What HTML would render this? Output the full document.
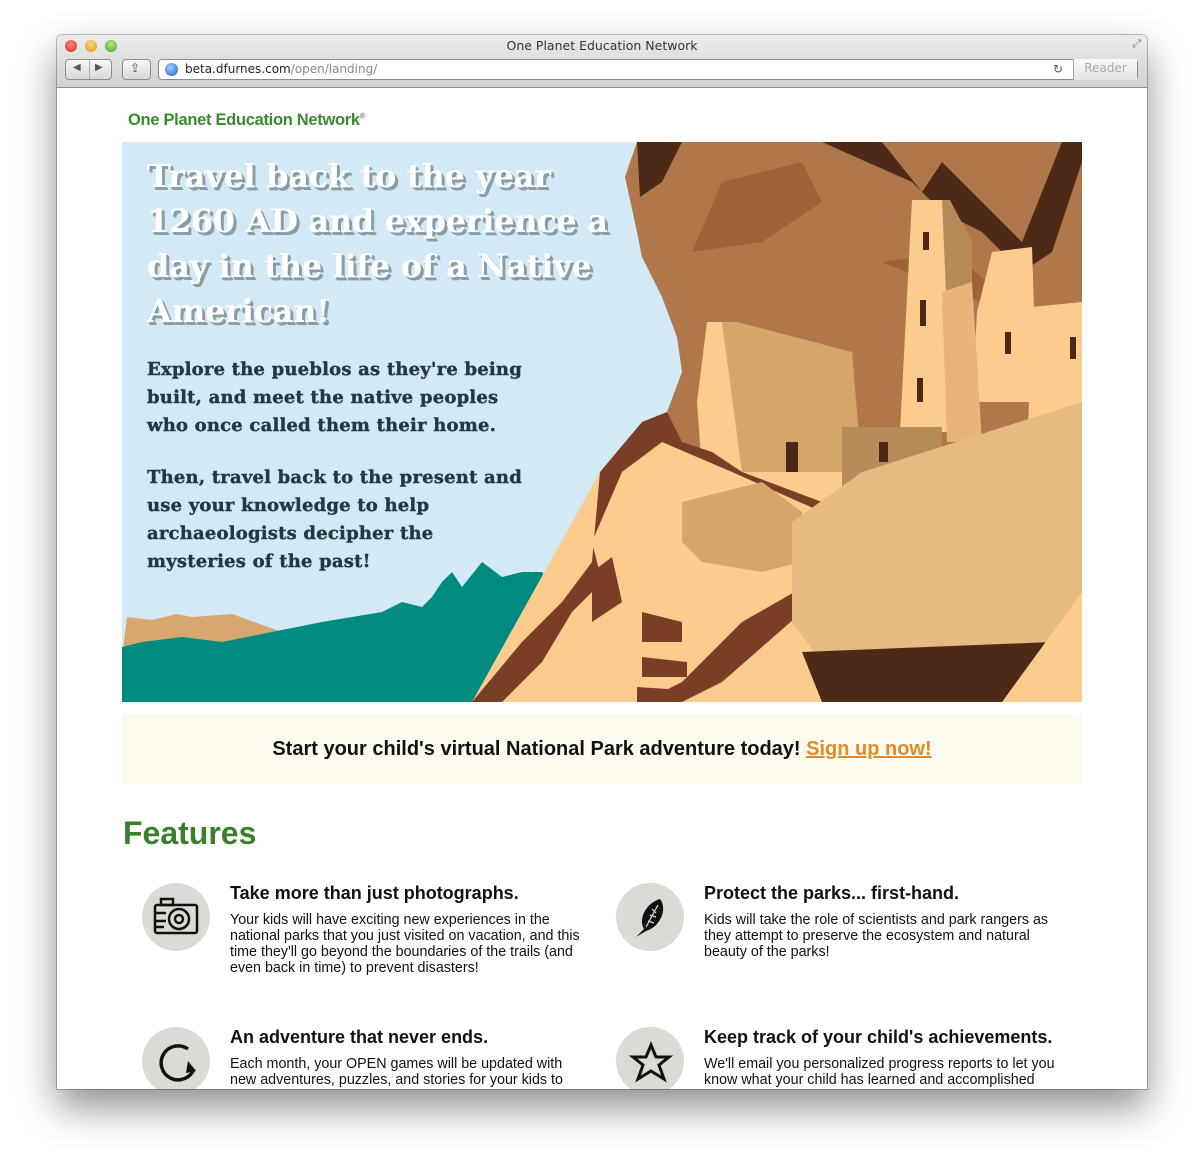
<!DOCTYPE html>
<html><head><meta charset="utf-8"><style>
*{margin:0;padding:0;box-sizing:border-box}
body{width:1204px;height:1168px;background:#fff;position:relative;overflow:hidden;font-family:"Liberation Sans",Arial,sans-serif}
.win{position:absolute;left:57px;top:35px;width:1090px;height:1054px;background:#fff;box-shadow:0 18px 40px rgba(0,0,0,.45),0 0 0 1px rgba(0,0,0,.25);border-radius:5px 5px 0 0;overflow:hidden}
.bar{height:53px;background:linear-gradient(#ebebeb,#d2d2d2);border-bottom:1px solid #8e8e8e;position:relative}
.dot{position:absolute;top:5px;width:12px;height:12px;border-radius:50%}
.ttl{position:absolute;top:3px;left:0;right:0;text-align:center;color:#333;font-family:"DejaVu Sans",sans-serif;font-size:12.5px}
.btn{position:absolute;top:24px;height:21px;border:1px solid #8c8c8c;border-radius:4px;background:linear-gradient(#f8f8f8,#d8d8d8)}
.url{position:absolute;left:101px;top:24px;width:980px;height:21px;border:1px solid #8c8c8c;border-radius:4px;background:#fff;font-family:"DejaVu Sans",sans-serif;font-size:12px;line-height:19px;padding-left:26px;color:#222}
.logo{position:absolute;left:71px;top:76px;color:#3a8a2e;font-weight:bold;font-size:16.5px;letter-spacing:-.3px}
.hero{position:absolute;left:65px;top:107px;width:960px;height:560px;background:#d3eaf6;overflow:hidden}
.h1{position:absolute;left:25px;top:12px;width:465px;font-family:"DejaVu Serif",serif;font-weight:bold;font-size:32px;line-height:45px;color:#fff;text-shadow:2px 2px 0 #8a9ca4,3px 3px 0 #8a9ca4;letter-spacing:-.3px}
.p{position:absolute;left:25px;width:382px;font-family:"DejaVu Serif",serif;font-weight:bold;font-size:18px;line-height:28px;color:#1d3a45;letter-spacing:.2px;-webkit-text-stroke:.4px #1d3a45}
.band{position:absolute;left:65px;top:679px;width:960px;height:70px;background:#fcf9ee;text-align:center;font-weight:bold;font-size:20px;line-height:70px;color:#111}
.band a{color:#e08a28;text-decoration:underline}
h2{position:absolute;left:66px;top:780px;font-size:32px;color:#3a7f2c;font-weight:bold}
.f{position:absolute;width:355px}
.f h3{font-size:18px;font-weight:bold;color:#111;margin-bottom:8px}
.f p{font-size:14.3px;line-height:16px;color:#111}
.c{position:absolute;width:68px;height:68px;border-radius:50%;background:#dcdad5}
</style></head><body>
<div class="win">
 <div class="bar">
  <div class="dot" style="left:8px;background:radial-gradient(circle at 50% 35%,#ff8b80,#d2261c)"></div>
  <div class="dot" style="left:28px;background:radial-gradient(circle at 50% 35%,#ffd77a,#d9931a)"></div>
  <div class="dot" style="left:48px;background:radial-gradient(circle at 50% 35%,#b3ec7f,#4e9e22)"></div>
  <div class="ttl">One Planet Education Network</div>
  <div class="btn" style="left:8px;width:47px"><span style="position:absolute;left:7px;top:2px;font-size:10px;color:#555">◀</span><span style="position:absolute;left:23px;top:0;height:19px;border-left:1px solid #aaa"></span><span style="position:absolute;left:29px;top:2px;font-size:10px;color:#555">▶</span></div>
  <div class="btn" style="left:65px;width:29px"><span style="position:absolute;left:7px;top:1px;font-size:12px;color:#555">⇪</span></div>
  <div class="url"><span style="position:absolute;left:6px;top:3px;width:13px;height:13px;border-radius:50%;background:radial-gradient(circle at 40% 35%,#9fd0ff,#1f5fc0)"></span>beta.dfurnes.com<span style="color:#888">/open/landing/</span><span style="position:absolute;right:74px;top:0;color:#555">↻</span><span style="position:absolute;right:0;top:-1px;width:64px;height:21px;border-left:1px solid #aaa;color:#aaa;text-align:center;background:linear-gradient(#fafafa,#e2e2e2)">Reader</span></div>
  <span style="position:absolute;right:6px;top:3px;font-size:11px;color:#777">⤢</span>
 </div>
 <div class="logo">One Planet Education Network<sup style="font-size:7px">®</sup></div>
 <div class="hero">
  <svg width="960" height="560" viewBox="0 0 960 560" style="position:absolute;left:0;top:0">
   <path d="M5 475 L30 478 L55 472 L70 475 L110 472 L160 490 L230 500 L260 515 L0 515Z" fill="#d6a86f"/>
   <path d="M0 505 L20 500 L60 495 L100 500 L150 490 L200 480 L260 470 L280 460 L300 465 L310 455 L320 440 L330 430 L340 445 L360 420 L380 435 L400 430 L420 430 L440 455 L470 560 L0 560Z" fill="#008a80"/>
   <path d="M515 0 L960 0 L960 330 L540 330 L545 270 L560 230 L555 195 L540 155 L520 115 L515 90 L503 35Z" fill="#b0784a"/>
   <path d="M478 330 L960 300 L960 560 L350 560Z" fill="#fccb8e"/>
   <path d="M515 0 L560 0 L540 40 L518 55Z M700 0 L760 0 L800 50 L820 20 L900 100 L940 0 L960 0 L960 20 L930 110 L900 130 L860 90 L820 70 L790 40 Z" fill="#4d2a17"/>
   <path d="M600 40 L680 20 L700 60 L640 100 L570 110Z M760 120 L830 110 L900 170 L860 160Z" fill="#9c6238"/>
   <path d="M790 58 L828 58 L835 290 L778 290Z" fill="#fccb8e"/>
   <path d="M820 58 L828 58 L850 100 L850 290 L830 290Z" fill="#b88a5a"/>
   <path d="M870 110 L910 105 L915 260 L850 260 L855 170 Z M910 165 L960 160 L960 330 L905 320Z" fill="#fccb8e"/>
   <path d="M820 150 L850 140 L860 300 L825 300Z" fill="#e7b57c"/>
   <path d="M600 180 L615 180 L730 210 L740 330 L620 330Z" fill="#d5a66c"/>
   <path d="M585 180 L600 180 L620 330 L580 330 L575 260Z" fill="#fccb8e"/>
   <path d="M720 285 L820 285 L820 360 L720 360Z" fill="#b78a5a"/>
   <rect x="664" y="300" width="12" height="30" fill="#4a2815"/><rect x="757" y="300" width="9" height="20" fill="#4a2815"/>
   <rect x="801" y="90" width="6" height="18" fill="#4a2815"/><rect x="798" y="158" width="6" height="26" fill="#4a2815"/><rect x="795" y="236" width="6" height="24" fill="#4a2815"/>
   <rect x="883" y="190" width="6" height="22" fill="#4a2815"/><rect x="948" y="195" width="6" height="22" fill="#4a2815"/>
   <path d="M478 330 L520 280 L545 270 L560 300 L590 310 L620 330 L700 360 L730 380 L720 440 L680 470 L600 540 L560 560 L350 560 L400 500 L440 460 L470 420Z" fill="#7a3d26"/>
   <path d="M500 330 L540 300 L610 330 L700 370 L690 440 L620 480 L560 540 L520 560 L380 560 L420 520 L450 470 L480 440 L470 400Z" fill="#fccb8e"/>
   <path d="M520 470 L560 480 L560 500 L520 500Z M520 515 L565 520 L565 535 L520 535Z M515 545 L560 548 L560 560 L515 560Z M470 430 L490 415 L500 460 L470 480Z" fill="#7a3d26"/>
   <path d="M560 360 L640 340 L680 370 L680 420 L640 430 L580 420 L560 400Z" fill="#d5a66c"/>
   <path d="M670 380 L740 330 L960 260 L960 520 L700 520 L670 480 Z" fill="#e7b983"/>
   <path d="M680 510 L930 500 L960 480 L960 560 L700 560Z" fill="#4d2a17"/>
   <path d="M880 560 L960 450 L960 560Z" fill="#fccb8e"/>
  </svg>
  <div class="h1">Travel back to the year 1260 AD and experience a day in the life of a Native American!</div>
  <div class="p" style="top:214px">Explore the pueblos as they're being built, and meet the native peoples who once called them their home.</div>
  <div class="p" style="top:322px">Then, travel back to the present and use your knowledge to help archaeologists decipher the mysteries of the past!</div>
 </div>
 <div class="band">Start your child's virtual National Park adventure today! <a>Sign up now!</a></div>
 <h2>Features</h2>
 <div class="c" style="left:85px;top:848px"><svg width="68" height="68"><g fill="none" stroke="#111" stroke-width="2.5"><rect x="13" y="22" width="42" height="28" rx="2"/><rect x="19" y="16" width="12" height="6"/><circle cx="37" cy="36" r="10"/><circle cx="37" cy="36" r="4"/><path d="M13 30 H24 M13 38 H24 M13 44 H22"/></g></svg></div>
 <div class="c" style="left:559px;top:848px"><svg width="68" height="68"><path d="M44 16 C52 26 44 44 30 48 L20 54 L28 46 C22 36 30 20 44 16Z" fill="#111"/><path d="M42 22 L30 44 M36 26 L40 30 M34 32 L40 34 M32 38 L38 40" stroke="#ddd" stroke-width="1.2"/></svg></div>
 <div class="f" style="left:173px;top:848px"><h3>Take more than just photographs.</h3><p>Your kids will have exciting new experiences in the national parks that you just visited on vacation, and this time they'll go beyond the boundaries of the trails (and even back in time) to prevent disasters!</p></div>
 <div class="f" style="left:647px;top:848px"><h3>Protect the parks... first-hand.</h3><p>Kids will take the role of scientists and park rangers as they attempt to preserve the ecosystem and natural beauty of the parks!</p></div>
 <div class="c" style="left:85px;top:992px"><svg width="68" height="68"><path d="M46 22 A17 17 0 1 0 52 42" fill="none" stroke="#111" stroke-width="3.5"/><path d="M46 34 L54 44 L44 46Z" fill="#111"/></svg></div>
 <div class="c" style="left:559px;top:992px"><svg width="68" height="68"><path d="M35 18 L40 30 L53 30 L43 38 L48 52 L35 44 L22 52 L27 38 L17 30 L30 30Z" fill="none" stroke="#111" stroke-width="3"/></svg></div>
 <div class="f" style="left:173px;top:992px"><h3>An adventure that never ends.</h3><p>Each month, your OPEN games will be updated with new adventures, puzzles, and stories for your kids to</p></div>
 <div class="f" style="left:647px;top:992px;width:360px"><h3>Keep track of your child's achievements.</h3><p>We'll email you personalized progress reports to let you know what your child has learned and accomplished</p></div>
</div>
</body></html>
